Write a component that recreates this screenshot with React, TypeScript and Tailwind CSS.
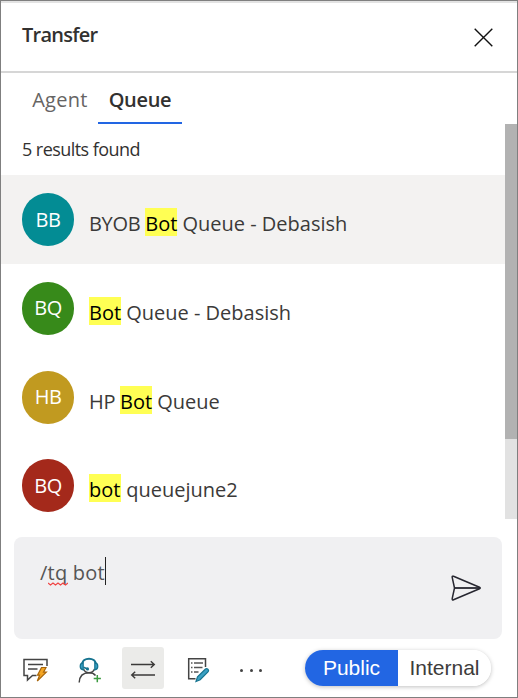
import React from "react";

type Queue = { initials: string; color: string; before: string; hit: string; after: string };

const queues: Queue[] = [
  { initials: "BB", color: "bg-[#038c94]", before: "BYOB ", hit: "Bot", after: " Queue - Debasish" },
  { initials: "BQ", color: "bg-[#378a1a]", before: "", hit: "Bot", after: " Queue - Debasish" },
  { initials: "HB", color: "bg-[#c19a20]", before: "HP ", hit: "Bot", after: " Queue" },
  { initials: "BQ", color: "bg-[#a4291b]", before: "", hit: "bot", after: " queuejune2" },
];

function QueueRow({ queue, active }: { queue: Queue; active: boolean }) {
  return (
    <li className={`flex h-[88.8px] shrink-0 items-start pl-[21px] pt-[18px] ${active ? "bg-[#f3f2f1]" : ""}`}>
      <div className={`flex h-[53px] w-[52px] shrink-0 items-center justify-center rounded-full text-[20px] font-medium tracking-[-0.5px] text-white ${queue.color}`}>
        {queue.initials}
      </div>
      <div className="ml-[15px] mt-[15px] whitespace-pre text-[20px] leading-[28px] text-[#3b3a39]">
        <span className="tracking-[-0.3px]">{queue.before}</span>
        <mark className="inline-block h-[28px] w-[32px] bg-[#ffff54] leading-[31px] text-black">{queue.hit}</mark>
        {queue.after}
      </div>
    </li>
  );
}

function QuickReplyIcon() {
  return (
    <svg width="26" height="26" viewBox="0 0 26 26" fill="none" className="shrink-0">
      <path d="M25 9V2.5H2V18.5H5.5V23L10.5 18.5H14.5M6 7.5H21M6 12H15.5" stroke="#444" strokeWidth="1.5" />
      <path d="M19.5 10.5H24L21.5 15.2H24.3L15.3 24L17.6 18.2H15.5Z" fill="#f5a623" stroke="#a8660b" strokeWidth="1.2" />
    </svg>
  );
}

function ConsultIcon() {
  return (
    <svg width="26" height="26" viewBox="0 0 26 26" fill="none" className="shrink-0">
      <path d="M1.2 25.5C1.5 19 5.5 15.8 11 15.8C14 15.8 16.2 16.7 17.5 18.5" stroke="#444" strokeWidth="1.5" />
      <path d="M3.8 7.5C4.5 -.2 17.5 -.2 18.2 7.5" stroke="#16738f" strokeWidth="2" />
      <path d="M5.5 12C7.5 17 14.5 17 16.5 12" stroke="#444" strokeWidth="1.5" />
      <path d="M5.2 5.7V13C1.2 12.5 1.2 6.2 5.2 5.7ZM16.8 5.7V13C20.8 12.5 20.8 6.2 16.8 5.7Z" fill="#3aa0c3" stroke="#16738f" strokeWidth="1.2" />
      <path d="M5.5 10.2L9 11.8" stroke="#16738f" strokeWidth="1.5" />
      <circle cx="9.5" cy="11.9" r="1.6" fill="#16738f" />
      <path d="M19.3 18V25.2M15.7 21.6H22.9" stroke="#3c9b41" strokeWidth="1.5" />
    </svg>
  );
}

function TransferIcon() {
  return (
    <svg width="26" height="20" viewBox="0 0 26 20" fill="none" stroke="#3b3a39" strokeWidth="1.4">
      <path d="M1 4.5H24.3M20.8 1.2L24.3 4.5L20.8 7.8M25 15H1.7M5.2 11.7L1.7 15L5.2 18.3" />
    </svg>
  );
}

function NotesIcon() {
  return (
    <svg width="24" height="26" viewBox="0 0 24 26" fill="none" className="shrink-0">
      <path d="M18.5 10V1.7H1.7V21.8H8.5" stroke="#444" strokeWidth="1.5" />
      <path d="M4 6H5.5M4 10.5H5.5M4 15H5.5M7 6H16M7 10.5H15.5M7 15H11.5" stroke="#555" strokeWidth="1.3" />
      <path d="M9 24.5L10.5 19.8L18.5 12C20 10.8 22.5 13 21.2 14.7L13.2 22.7Z" fill="#3aa0c3" stroke="#16738f" strokeWidth="1.2" />
    </svg>
  );
}

export default function App() {
  return (
    <div className="flex h-[698px] w-[518px] flex-col overflow-hidden border border-[#7f7f7f] bg-white font-['Open_Sans','Noto_Sans',sans-serif] text-[#323130]">
      <header className="flex h-[72px] shrink-0 items-start justify-between border-t-2 border-b-2 border-t-[#e3e3e3] border-b-[#d6d6d6] pl-[21px] pr-[24px]">
        <h1 className="mt-[18px] text-[20px] font-semibold leading-[28px] tracking-[-0.75px]">Transfer</h1>
        <svg width="19" height="19" viewBox="0 0 19 19" fill="none" stroke="#111" strokeWidth="1.4" className="mt-[25px]">
          <path d="M.7 .7L18.3 18.3M18.3 .7L.7 18.3" />
        </svg>
      </header>
      <nav className="flex h-[51px] shrink-0 pl-[21px] text-[20px] leading-[28px]">
        <button className="flex w-[76px] justify-center pt-[13px] tracking-[0.3px] text-[#666463]">Agent</button>
        <button className="flex w-[84px] justify-center border-b-2 border-[#2266e3] pt-[13px] font-semibold tracking-[-0.3px]">Queue</button>
      </nav>
      <div className="flex h-[395px] shrink-0">
        <section className="flex flex-1 flex-col overflow-hidden">
          <p className="h-[51px] shrink-0 pl-[21px] pt-[12px] text-[18px] leading-[26px] tracking-[-0.55px]">5 results found</p>
          <ul className="flex flex-col">
            {queues.map((q, i) => (
              <QueueRow key={i} queue={q} active={i === 0} />
            ))}
          </ul>
        </section>
        <div className="w-[12px] shrink-0 bg-[#e2e2e2]">
          <div className="h-[315px] bg-[#b2b2b2]" />
        </div>
      </div>
      <div className="ml-[13px] mt-[18px] flex h-[102px] w-[488px] shrink-0 justify-between rounded-[8px] bg-[#f0f0f2] pl-[26px] pr-[20px]">
        <div className="mt-[20px] flex h-[28px] items-start text-[20px] leading-[32px] tracking-[0.2px] text-[#555]">
          <span>/</span>
          <span className="relative">
            tq
            <svg width="20" height="4" viewBox="0 0 20 4" fill="none" className="absolute left-0 top-[25px]">
              <path d="M0 1L2.5 3L5 1L7.5 3L10 1L12.5 3L15 1L17.5 3L20 1" stroke="#f04444" strokeWidth="1.2" />
            </svg>
          </span>
          <span className="whitespace-pre"> bot</span>
          <span className="h-[28px] w-px bg-[#222]" />
        </div>
        <svg width="31" height="26" viewBox="0 0 31 26" fill="none" stroke="#262630" strokeWidth="1.5" strokeLinejoin="round" className="mt-[38px]">
          <path d="M1.2 2.3C1 1.2 1.6.9 2.5 1.3L28.5 12.2C29.5 12.7 29.5 13.3 28.5 13.8L2.5 24.7C1.6 25.1 1 24.8 1.2 23.7L3.5 13Z" />
          <path d="M3.5 13H28.5" strokeWidth="1.8" />
        </svg>
      </div>
      <footer className="flex h-[58px] shrink-0 items-center pl-[21px]">
        <div className="mt-[4px]"><QuickReplyIcon /></div>
        <div className="ml-[30px] mt-[3px]"><ConsultIcon /></div>
        <button className="ml-[18px] flex h-[42px] w-[42px] shrink-0 items-center justify-center rounded-[3px] bg-[#ebebe9] pt-[4px]"><TransferIcon /></button>
        <div className="ml-[23px] mt-[4px]"><NotesIcon /></div>
        <div className="ml-[29px] mt-[4px] flex w-[22px] shrink-0 justify-between">
          <i className="h-[3px] w-[3px] rounded-full bg-[#444]" />
          <i className="h-[3px] w-[3px] rounded-full bg-[#444]" />
          <i className="h-[3px] w-[3px] rounded-full bg-[#444]" />
        </div>
        <div className="ml-[43px] flex h-[36px] w-[186px] shrink-0 overflow-hidden rounded-full font-['Liberation_Sans',sans-serif] text-[21px] shadow-[0_1px_4px_rgba(0,0,0,0.25)]">
          <button className="w-[93px] bg-[#2266e3] text-white">Public</button>
          <button className="w-[93px] bg-white text-[#3d3c3b]">Internal</button>
        </div>
      </footer>
    </div>
  );
}
